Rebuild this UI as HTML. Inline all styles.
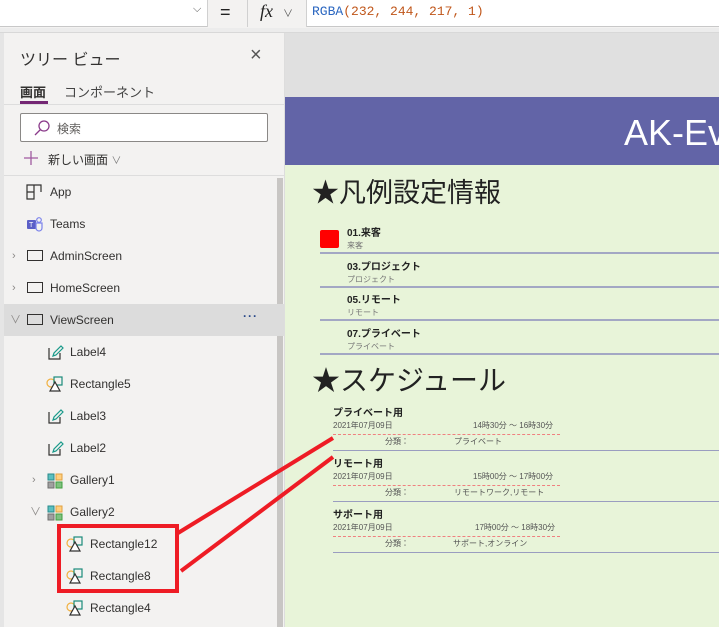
<!DOCTYPE html>
<html><head><meta charset="utf-8"><style>
*{margin:0;padding:0;box-sizing:border-box}
body{width:719px;height:627px;overflow:hidden;position:relative;background:#f3f2f1;font-family:"Liberation Sans","Noto Sans CJK JP",sans-serif;color:#323130}
.a{position:absolute;white-space:nowrap}
.row{position:absolute;left:4px;width:273px;height:32px;font-size:12px;line-height:32px;color:#323130}
.scr{display:inline-block;width:16px;height:11px;border:1.3px solid #323130;vertical-align:middle}
.chev{position:absolute;left:8px;top:0;color:#8a8886;font-size:11px}
.lg{position:absolute;left:347px;font-size:10px;line-height:1;font-weight:bold;color:#222;white-space:nowrap}
.lgs{position:absolute;left:347px;font-size:8px;line-height:1;color:#777;white-space:nowrap}
.dv{position:absolute;left:320px;width:399px;height:2px;background:#a3a7c4}
.st{position:absolute;left:333px;font-size:10px;line-height:1;font-weight:bold;color:#222;white-space:nowrap}
.sd{position:absolute;font-size:8px;line-height:1;color:#555;white-space:nowrap}
.dash{position:absolute;left:333px;width:227px;border-top:1px dashed #f08080}
.sdv{position:absolute;left:333px;width:386px;height:1px;background:#9a9dc0}
</style></head><body>
<div class="a" style="left:0;top:0;width:719px;height:27px;background:#fff;border-bottom:1px solid #c8c8c8"></div>
<div class="a" style="left:207px;top:0;width:40px;height:27px;background:#f3f2f1;border-left:1px solid #d0d0d0"></div>
<div class="a" style="left:193px;top:3px;font-size:11px;color:#555">&#x2335;</div>
<div class="a" style="left:220px;top:2px;font-size:18px;color:#222">=</div>
<div class="a" style="left:247px;top:0;width:60px;height:27px;background:#f3f2f1;border-left:1px solid #d0d0d0;border-right:1px solid #d0d0d0"></div>
<div class="a" style="left:260px;top:1px;font-size:18px;font-style:italic;font-family:'Liberation Serif',serif;color:#222">fx</div>
<div class="a" style="left:283px;top:5px;font-size:10px;color:#555">&#x2228;</div>
<div class="a" style="left:312px;top:4px;font-size:13px;font-family:'Liberation Mono',monospace;color:#c0561a"><span style="color:#2a66c0">RGBA</span>(232, 244, 217, 1)</div>
<div class="a" style="left:0;top:28px;width:719px;height:5px;background:#ececec;border-bottom:1px solid #d8d8d8"></div>
<div class="a" style="left:0;top:33px;width:4px;height:594px;background:#e5e5e5"></div>
<div class="a" style="left:20px;top:46px;font-size:16px;color:#323130">ツリー ビュー</div>
<div class="a" style="left:250px;top:44px;font-size:20px;color:#555;font-weight:300">×</div>
<div class="a" style="left:20px;top:82px;font-size:13px;font-weight:bold">画面</div>
<div class="a" style="left:20px;top:101px;width:28px;height:3px;background:#742774"></div>
<div class="a" style="left:64px;top:82px;font-size:13px;color:#444">コンポーネント</div>
<div class="a" style="left:4px;top:104px;width:280px;height:1px;background:#ddd"></div>
<div class="a" style="left:20px;top:113px;width:248px;height:29px;background:#fff;border:1px solid #8a8886;border-radius:2px"></div>
<svg class="a" style="left:33px;top:119px" width="18" height="18"><circle cx="11" cy="7" r="5" fill="none" stroke="#8a3a8a" stroke-width="1.3"/><line x1="7.5" y1="10.5" x2="2" y2="16" stroke="#8a3a8a" stroke-width="1.3"/></svg>
<div class="a" style="left:57px;top:120px;font-size:12px;color:#605e5c">検索</div>
<svg class="a" style="left:23px;top:150px" width="16" height="16"><path d="M8 1v14M1 8h14" stroke="#a05aa0" stroke-width="1.3"/></svg>
<div class="a" style="left:48px;top:151px;font-size:12px;color:#323130">新しい画面 <span style="color:#777;font-size:10px">&#x2228;</span></div>
<div class="a" style="left:4px;top:175px;width:280px;height:1px;background:#ddd"></div>
<div class="a" style="left:277px;top:178px;width:6px;height:449px;background:#c8c6c4"></div>
<div class="a" style="left:284px;top:33px;width:1px;height:594px;background:#ddd"></div>

<div class="row" style="top:176px"><svg class="a" style="left:22px;top:8px" width="16" height="16"><path d="M1 1h7v7H1zM8 1h7v7M1 8v7h7v-7" fill="none" stroke="#323130" stroke-width="1.2"/></svg><span style="position:absolute;left:46px">App</span></div>
<div class="row" style="top:208px"><svg class="a" style="left:22px;top:8px" width="18" height="16"><rect x="1" y="4" width="9" height="9" rx="1" fill="#5b5fc7"/><circle cx="13" cy="4" r="2.3" fill="none" stroke="#7b83eb" stroke-width="1.2"/><path d="M10 7h6v5a3 3 0 0 1-6 0z" fill="none" stroke="#7b83eb" stroke-width="1.2"/><text x="3" y="11" font-size="7" fill="#fff" font-family="Liberation Sans">T</text></svg><span style="position:absolute;left:46px">Teams</span></div>
<div class="row" style="top:240px"><span class="chev">&#x203A;</span><span class="scr" style="position:absolute;left:23px;top:10px"></span><span style="position:absolute;left:46px">AdminScreen</span></div>
<div class="row" style="top:272px"><span class="chev">&#x203A;</span><span class="scr" style="position:absolute;left:23px;top:10px"></span><span style="position:absolute;left:46px">HomeScreen</span></div>
<div class="row" style="top:304px;background:#dcdcdc;width:280px"><span class="chev" style="left:6px">&#x2228;</span><span class="scr" style="position:absolute;left:23px;top:10px"></span><span style="position:absolute;left:46px">ViewScreen</span><span style="position:absolute;left:239px;top:-4px;color:#2a4a8a;font-weight:bold;letter-spacing:1px">···</span></div>

<div class="row" style="top:336px"><svg class="a" style="left:44px;top:9px" width="16" height="15"><path d="M1 3v11h11V8" fill="none" stroke="#323130" stroke-width="1.2"/><path d="M5 11l1-3 7-7 2 2-7 7z" fill="none" stroke="#1a9a8a" stroke-width="1.2"/></svg><span style="position:absolute;left:66px">Label4</span></div>
<div class="row" style="top:368px"><svg class="a" style="left:42px;top:8px" width="18" height="17"><circle cx="5" cy="7" r="4" fill="none" stroke="#f0b040" stroke-width="1.2"/><rect x="8" y="1" width="8" height="8" fill="none" stroke="#1a8a7a" stroke-width="1.2"/><path d="M9 6l-5 9h10z" fill="#fff" stroke="#323130" stroke-width="1.2"/></svg><span style="position:absolute;left:66px">Rectangle5</span></div>
<div class="row" style="top:400px"><svg class="a" style="left:44px;top:9px" width="16" height="15"><path d="M1 3v11h11V8" fill="none" stroke="#323130" stroke-width="1.2"/><path d="M5 11l1-3 7-7 2 2-7 7z" fill="none" stroke="#1a9a8a" stroke-width="1.2"/></svg><span style="position:absolute;left:66px">Label3</span></div>
<div class="row" style="top:432px"><svg class="a" style="left:44px;top:9px" width="16" height="15"><path d="M1 3v11h11V8" fill="none" stroke="#323130" stroke-width="1.2"/><path d="M5 11l1-3 7-7 2 2-7 7z" fill="none" stroke="#1a9a8a" stroke-width="1.2"/></svg><span style="position:absolute;left:66px">Label2</span></div>
<div class="row" style="top:464px"><span class="chev" style="left:28px">&#x203A;</span><svg class="a" style="left:43px;top:9px" width="16" height="16"><rect x="1" y="1" width="6" height="6" fill="#5bc0c0" stroke="#2a8a8a"/><rect x="9" y="1" width="6" height="6" fill="#ffd080" stroke="#e0a040"/><rect x="1" y="9" width="6" height="6" fill="#a0a0a0" stroke="#707070"/><rect x="9" y="9" width="6" height="6" fill="#80c080" stroke="#40a040"/></svg><span style="position:absolute;left:66px">Gallery1</span></div>
<div class="row" style="top:496px"><span class="chev" style="left:26px">&#x2228;</span><svg class="a" style="left:43px;top:9px" width="16" height="16"><rect x="1" y="1" width="6" height="6" fill="#5bc0c0" stroke="#2a8a8a"/><rect x="9" y="1" width="6" height="6" fill="#ffd080" stroke="#e0a040"/><rect x="1" y="9" width="6" height="6" fill="#a0a0a0" stroke="#707070"/><rect x="9" y="9" width="6" height="6" fill="#80c080" stroke="#40a040"/></svg><span style="position:absolute;left:66px">Gallery2</span></div>
<div class="row" style="top:528px"><svg class="a" style="left:62px;top:8px" width="18" height="17"><circle cx="5" cy="7" r="4" fill="none" stroke="#f0b040" stroke-width="1.2"/><rect x="8" y="1" width="8" height="8" fill="none" stroke="#1a8a7a" stroke-width="1.2"/><path d="M9 6l-5 9h10z" fill="#fff" stroke="#323130" stroke-width="1.2"/></svg><span style="position:absolute;left:86px">Rectangle12</span></div>
<div class="row" style="top:560px"><svg class="a" style="left:62px;top:8px" width="18" height="17"><circle cx="5" cy="7" r="4" fill="none" stroke="#f0b040" stroke-width="1.2"/><rect x="8" y="1" width="8" height="8" fill="none" stroke="#1a8a7a" stroke-width="1.2"/><path d="M9 6l-5 9h10z" fill="#fff" stroke="#323130" stroke-width="1.2"/></svg><span style="position:absolute;left:86px">Rectangle8</span></div>
<div class="row" style="top:592px"><svg class="a" style="left:62px;top:8px" width="18" height="17"><circle cx="5" cy="7" r="4" fill="none" stroke="#f0b040" stroke-width="1.2"/><rect x="8" y="1" width="8" height="8" fill="none" stroke="#1a8a7a" stroke-width="1.2"/><path d="M9 6l-5 9h10z" fill="#fff" stroke="#323130" stroke-width="1.2"/></svg><span style="position:absolute;left:86px">Rectangle4</span></div>

<div class="a" style="left:285px;top:33px;width:434px;height:64px;background:#e0e0e0"></div>
<div class="a" style="left:285px;top:97px;width:434px;height:68px;background:#6264a7;overflow:hidden"><div class="a" style="left:339px;top:15px;font-size:36px;color:#fff">AK-Ev</div></div>
<div class="a" style="left:285px;top:165px;width:434px;height:462px;background:#e8f4d9"></div>
<div class="a" style="left:312px;top:171px;font-size:27px;color:#222">★凡例設定情報</div>
<div class="a" style="left:320px;top:230px;width:19px;height:18px;background:#ff0000;border-radius:2px"></div>
<div class="lg" style="top:229px">01.来客</div><div class="lgs" style="top:242px">来客</div>
<div class="dv" style="top:252px"></div>
<div class="lg" style="top:263px">03.プロジェクト</div><div class="lgs" style="top:276px">プロジェクト</div>
<div class="dv" style="top:286px"></div>
<div class="lg" style="top:296px">05.リモート</div><div class="lgs" style="top:309px">リモート</div>
<div class="dv" style="top:319px"></div>
<div class="lg" style="top:330px">07.プライベート</div><div class="lgs" style="top:343px">プライベート</div>
<div class="dv" style="top:353px"></div>
<div class="a" style="left:312px;top:359px;font-size:28px;color:#222">★スケジュール</div>

<div class="st" style="top:409px">プライベート用</div>
<div class="sd" style="left:333px;top:422px">2021年07月09日</div><div class="sd" style="left:473px;top:422px">14時30分 ～ 16時30分</div>
<div class="dash" style="top:434px"></div>
<div class="sd" style="left:385px;top:438px">分類：</div><div class="sd" style="left:454px;top:438px">プライベート</div>
<div class="sdv" style="top:450px"></div>

<div class="st" style="top:460px">リモート用</div>
<div class="sd" style="left:333px;top:473px">2021年07月09日</div><div class="sd" style="left:473px;top:473px">15時00分 ～ 17時00分</div>
<div class="dash" style="top:485px"></div>
<div class="sd" style="left:385px;top:489px">分類：</div><div class="sd" style="left:454px;top:489px">リモートワーク,リモート</div>
<div class="sdv" style="top:501px"></div>

<div class="st" style="top:511px">サポート用</div>
<div class="sd" style="left:333px;top:524px">2021年07月09日</div><div class="sd" style="left:475px;top:524px">17時00分 ～ 18時30分</div>
<div class="dash" style="top:536px"></div>
<div class="sd" style="left:385px;top:540px">分類：</div><div class="sd" style="left:453px;top:540px">サポート,オンライン</div>
<div class="sdv" style="top:552px"></div>

<div class="a" style="left:57px;top:524px;width:122px;height:69px;border:4px solid #ee1c25"></div>
<svg class="a" style="left:0;top:0" width="719" height="627"><line x1="178" y1="533" x2="333" y2="438" stroke="#ee1c25" stroke-width="4"/><line x1="181" y1="571" x2="333" y2="457" stroke="#ee1c25" stroke-width="4"/></svg>
</body></html>
